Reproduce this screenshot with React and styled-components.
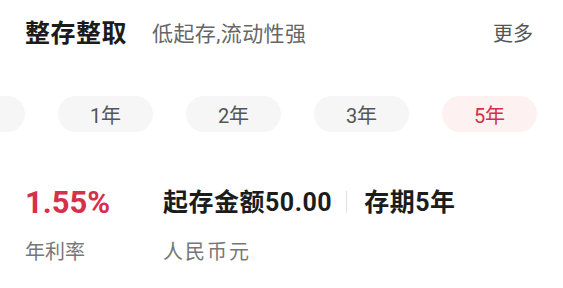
import React from 'react';
import styled, { createGlobalStyle } from 'styled-components';

const GlobalStyle = createGlobalStyle`
	html, body {
		margin: 0;
		padding: 0;
		background: #fff;
	}
	body {
		font-family: Roboto, 'Noto Sans CJK SC', sans-serif;
	}
`;

const Card = styled('section')`
	width: 563px;
	height: 288px;
	overflow: hidden;
	background: #fff;
`;

const Header = styled('header')`
	display: flex;
	align-items: center;
	justify-content: space-between;
	height: 36px;
	padding: 16px 30px 0 25px;
`;

const TitleGroup = styled('div')`
	display: flex;
	align-items: center;
	gap: 25px;
`;

const Title = styled('h2')`
	margin: 0;
	font-size: 25px;
	font-weight: 700;
	color: #1c1c1c;
	line-height: 36px;
	letter-spacing: 0.5px;
`;

const Subtitle = styled('span')`
	font-size: 21px;
	color: #666;
	line-height: 36px;
	letter-spacing: 0.4px;
`;

const More = styled('a')`
	font-size: 20px;
	color: #555;
	line-height: 36px;
	text-decoration: none;
`;

const Terms = styled('ul')`
	display: flex;
	gap: 33px;
	list-style: none;
	margin: 44px 0 0 -70px;
	padding: 0;
`;

const Term = styled('li')`
	flex: 0 0 95px;
	height: 36px;
	border-radius: 18px;
	display: flex;
	align-items: center;
	justify-content: center;
	font-size: 20px;
	color: ${(p) => (p.$active ? '#d42f47' : '#555')};
	background: ${(p) => (p.$active ? '#fdf1f2' : '#f6f6f6')};
`;

const Info = styled('div')`
	display: grid;
	grid-template-columns: 138px auto;
	grid-auto-rows: 48px;
	align-items: center;
	margin-top: 46px;
	padding: 0 25px;
`;

const Rate = styled('span')`
	font-size: 31px;
	font-weight: 700;
	color: #d6304a;
	line-height: 1;
`;

const Detail = styled('div')`
	display: flex;
	align-items: center;
	font-size: 25px;
	font-weight: 700;
	color: #1c1c1c;
	line-height: 1;
	letter-spacing: 0.5px;
`;

const Divider = styled('span')`
	width: 1px;
	height: 22px;
	background: #e2e2e2;
	margin: 0 17px 0 14px;
`;

const Label = styled('span')`
	font-size: 20px;
	color: #777;
	line-height: 1;
	letter-spacing: ${(p) => p.$spacing || 0}px;
	margin-top: 4px;
`;

const terms = ['', '1年', '2年', '3年', '5年'];

const App = () => {
	return (
		<Card>
			<GlobalStyle />
			<Header>
				<TitleGroup>
					<Title>整存整取</Title>
					<Subtitle>低起存,流动性强</Subtitle>
				</TitleGroup>
				<More href="#">更多</More>
			</Header>

			<Terms>
				{terms.map((t, i) => (
					<Term key={i} $active={t === '5年'}>
						{t}
					</Term>
				))}
			</Terms>

			<Info>
				<Rate>1.55%</Rate>
				<Detail>
					起存金额50.00
					<Divider />
					存期5年
				</Detail>
				<Label>年利率</Label>
				<Label $spacing={2}>人民币元</Label>
			</Info>
		</Card>
	);
};

export default App;
